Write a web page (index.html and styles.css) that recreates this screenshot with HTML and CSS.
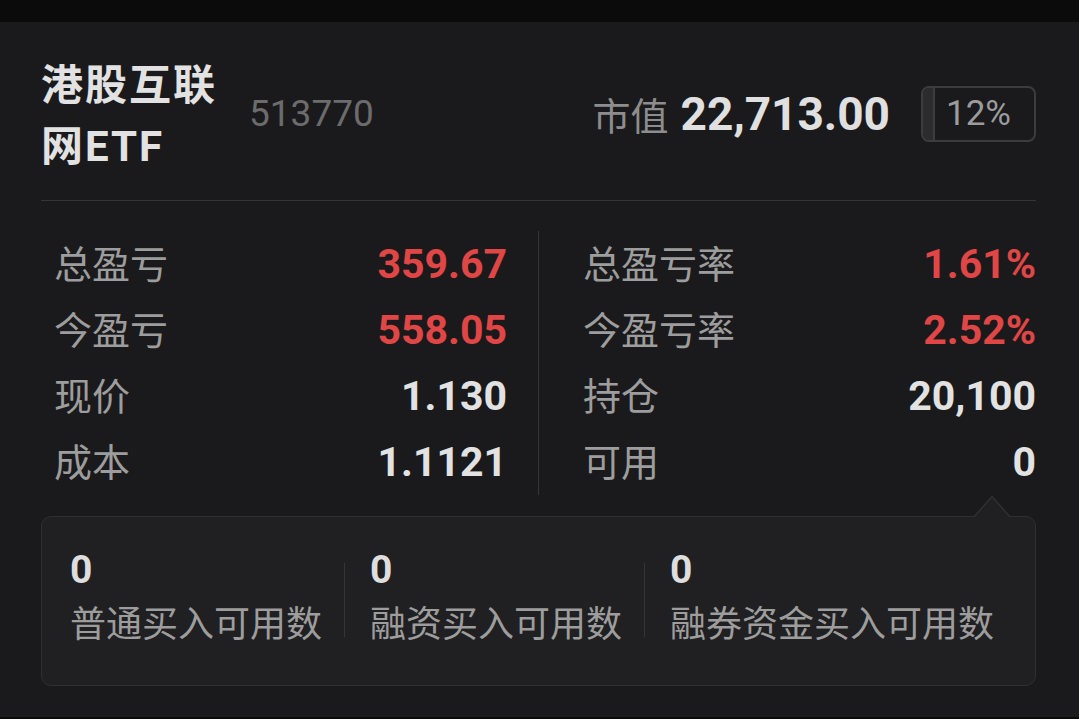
FILE: index.html
```html
<!DOCTYPE html>
<html lang="zh-CN">
<head>
  <meta charset="UTF-8">
  <title>持仓详情</title>
  <link rel="stylesheet" href="styles.css">
</head>
<body>

  <div class="topbar"></div>

  <div class="card">
    <div class="header">
      <div class="name">港股互联网ETF</div>
      <div class="code">513770</div>
      <div class="mv">
        <span class="mv-label">市值</span>
        <span class="mv-value">22,713.00</span>
      </div>
      <div class="ratio">
        <div class="ratio-fill"></div>
        <span>12%</span>
      </div>
    </div>

    <div class="stats">
      <div class="col left">
        <div class="row"><span class="lbl">总盈亏</span><span class="val up">359.67</span></div>
        <div class="row"><span class="lbl">今盈亏</span><span class="val up">558.05</span></div>
        <div class="row"><span class="lbl">现价</span><span class="val">1.130</span></div>
        <div class="row"><span class="lbl">成本</span><span class="val">1.1121</span></div>
      </div>
      <div class="col right">
        <div class="row"><span class="lbl">总盈亏率</span><span class="val up">1.61%</span></div>
        <div class="row"><span class="lbl">今盈亏率</span><span class="val up">2.52%</span></div>
        <div class="row"><span class="lbl">持仓</span><span class="val">20,100</span></div>
        <div class="row"><span class="lbl">可用</span><span class="val">0</span></div>
      </div>
    </div>

    <div class="avail">
      <svg class="pointer" width="36" height="23" viewBox="0 0 36 23">
        <polygon points="0,23 18,1.5 36,23" fill="#202022"/>
        <polyline points="0,22 18,1.5 36,22" fill="none" stroke="#2f2f31" stroke-width="1.6"/>
      </svg>
      <div class="item">
        <div class="num">0</div>
        <div class="txt">普通买入可用数</div>
      </div>
      <div class="sep"></div>
      <div class="item">
        <div class="num">0</div>
        <div class="txt">融资买入可用数</div>
      </div>
      <div class="sep"></div>
      <div class="item">
        <div class="num">0</div>
        <div class="txt">融券资金买入可用数</div>
      </div>
    </div>
  </div>

  <div class="bottombar"></div>

</body>
</html>
```

FILE: styles.css
```css
html, body {
  margin: 0;
  height: 100%;
}

body {
  background: #1a1a1c;
  font-family: Roboto, "Noto Sans CJK SC", sans-serif;
  color: #dedede;
  display: flex;
  flex-direction: column;
}

.topbar {
  height: 22px;
  background: #0b0b0c;
}

.bottombar {
  height: 2px;
  margin-top: auto;
  background: #0b0b0c;
}

.card {
  padding: 28px 43px 0 41px;
}

/* header */
.header {
  display: flex;
  align-items: center;
  padding-bottom: 23px;
  border-bottom: 1px solid #353537;
}

.name {
  width: 190px;
  margin-right: 18px;
  padding-top: 5px;
  font-size: 42px;
  line-height: 61px;
  letter-spacing: 2px;
  font-weight: bold;
  color: #e2e2e2;
}

.code {
  font-size: 37px;
  color: #6c6c6c;
}

.mv {
  margin-left: auto;
  display: flex;
  align-items: baseline;
  gap: 12px;
}

.mv-label {
  font-size: 38px;
  color: #8d8d8d;
}

.mv-value {
  font-size: 46px;
  font-weight: bold;
  color: #e0e0e0;
}

.ratio {
  position: relative;
  margin-left: 31px;
  width: 111px;
  height: 52px;
  border: 2px solid #3c3c3e;
  border-radius: 8px;
  overflow: hidden;
  display: flex;
  align-items: center;
  justify-content: center;
  font-size: 35px;
  color: #9c9c9c;
}

.ratio-fill {
  position: absolute;
  left: 0;
  top: 0;
  bottom: 0;
  width: 10px;
  background: #2c2c2e;
  border-right: 2px solid #3c3c3e;
}

/* stats */
.stats {
  display: flex;
  margin-top: 30px;
}

.col {
  flex: 1;
}

.col.left {
  padding: 0 31px 0 13px;
  border-right: 1px solid #353537;
}

.col.right {
  padding-left: 44px;
}

.row {
  display: flex;
  align-items: baseline;
  justify-content: space-between;
  height: 66px;
  line-height: 66px;
}

.lbl {
  font-size: 38px;
  color: #9d9d9d;
}

.val {
  font-size: 41px;
  font-weight: bold;
  color: #e2e2e2;
}

.val.up {
  color: #e04646;
}

/* available quantities */
.avail {
  position: relative;
  display: flex;
  align-items: center;
  margin-top: 21px;
  padding: 29px 0 36px 28px;
  background: #202022;
  border: 1px solid #2f2f31;
  border-radius: 10px;
}

.pointer {
  position: absolute;
  right: 25px;
  top: -22px;
}

.item {
  padding-right: 22px;
}

.sep + .item {
  padding-left: 25px;
}

.sep {
  width: 1px;
  height: 74px;
  margin-top: 5px;
  background: #353537;
}

.num {
  font-size: 39px;
  line-height: 48px;
  font-weight: bold;
  color: #dedede;
}

.txt {
  margin-top: 7px;
  font-size: 36px;
  line-height: 48px;
  color: #9d9d9d;
}
```
